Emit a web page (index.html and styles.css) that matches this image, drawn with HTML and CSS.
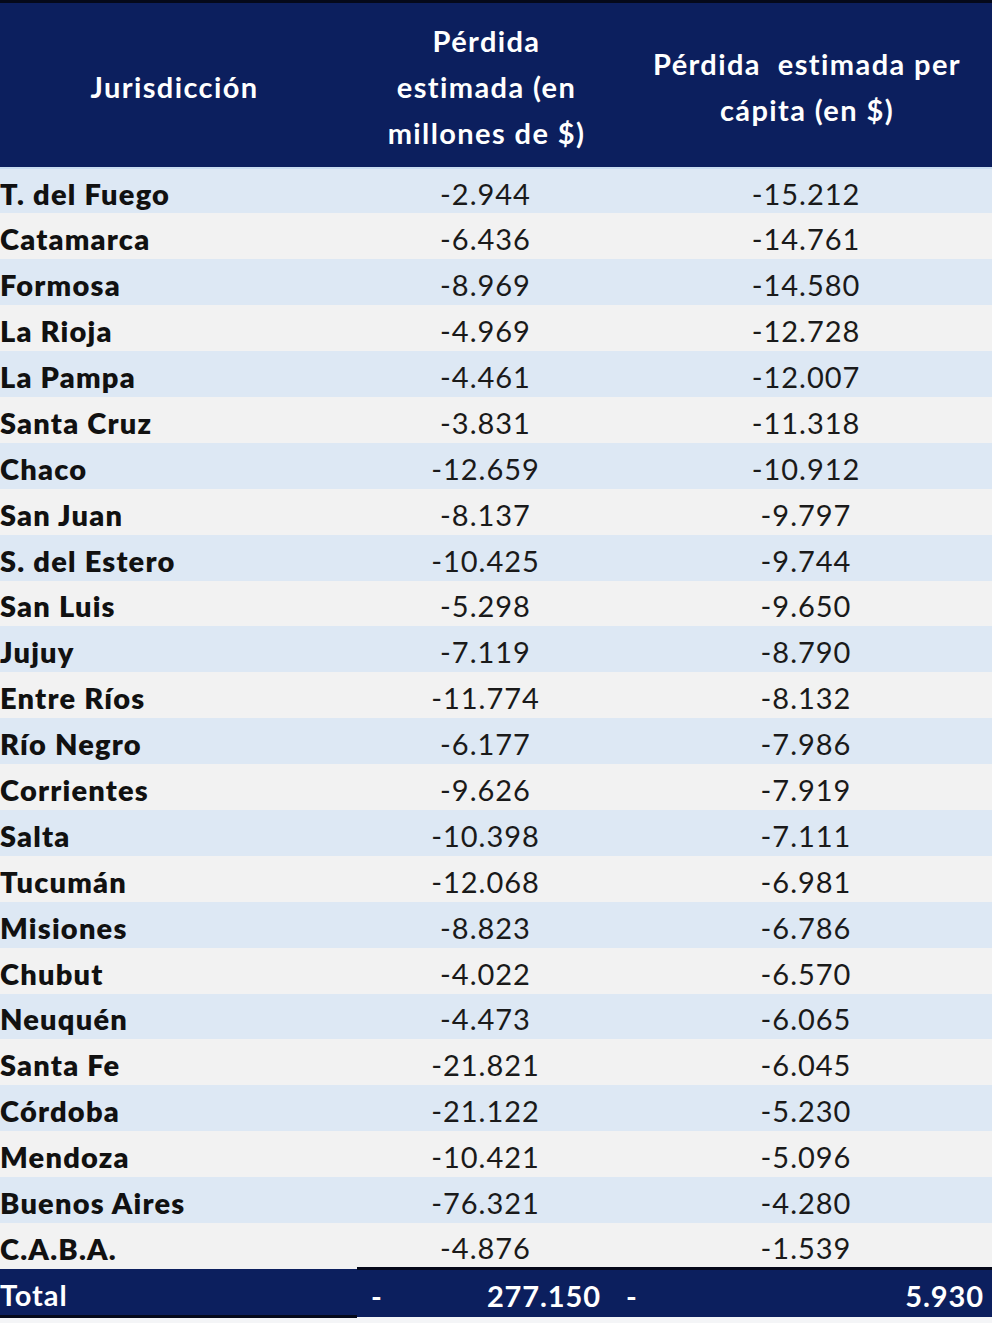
FILE: index.html
```html
<!DOCTYPE html>
<html lang="es">
<head>
<meta charset="utf-8">
<title>Pérdida estimada por jurisdicción</title>
<link rel="stylesheet" href="styles.css">
</head>
<body>
<table class="tbl">
  <colgroup>
    <col class="c1">
    <col class="c2">
    <col class="c3">
  </colgroup>
  <thead>
    <tr class="head">
      <th class="h1">Jurisdicción</th>
      <th class="h2">Pérdida<br>estimada (en<br>millones de $)</th>
      <th class="h3">Pérdida&nbsp; estimada per<br>cápita (en $)</th>
    </tr>
  </thead>
  <tbody>
    <tr class="odd"><td class="name">T. del Fuego</td><td class="num n2">-2.944</td><td class="num">-15.212</td></tr>
    <tr class="even"><td class="name">Catamarca</td><td class="num n2">-6.436</td><td class="num">-14.761</td></tr>
    <tr class="odd"><td class="name">Formosa</td><td class="num n2">-8.969</td><td class="num">-14.580</td></tr>
    <tr class="even"><td class="name">La Rioja</td><td class="num n2">-4.969</td><td class="num">-12.728</td></tr>
    <tr class="odd"><td class="name">La Pampa</td><td class="num n2">-4.461</td><td class="num">-12.007</td></tr>
    <tr class="even"><td class="name">Santa Cruz</td><td class="num n2">-3.831</td><td class="num">-11.318</td></tr>
    <tr class="odd"><td class="name">Chaco</td><td class="num n2">-12.659</td><td class="num">-10.912</td></tr>
    <tr class="even"><td class="name">San Juan</td><td class="num n2">-8.137</td><td class="num">-9.797</td></tr>
    <tr class="odd"><td class="name">S. del Estero</td><td class="num n2">-10.425</td><td class="num">-9.744</td></tr>
    <tr class="even"><td class="name">San Luis</td><td class="num n2">-5.298</td><td class="num">-9.650</td></tr>
    <tr class="odd"><td class="name">Jujuy</td><td class="num n2">-7.119</td><td class="num">-8.790</td></tr>
    <tr class="even"><td class="name">Entre Ríos</td><td class="num n2">-11.774</td><td class="num">-8.132</td></tr>
    <tr class="odd"><td class="name">Río Negro</td><td class="num n2">-6.177</td><td class="num">-7.986</td></tr>
    <tr class="even"><td class="name">Corrientes</td><td class="num n2">-9.626</td><td class="num">-7.919</td></tr>
    <tr class="odd"><td class="name">Salta</td><td class="num n2">-10.398</td><td class="num">-7.111</td></tr>
    <tr class="even"><td class="name">Tucumán</td><td class="num n2">-12.068</td><td class="num">-6.981</td></tr>
    <tr class="odd"><td class="name">Misiones</td><td class="num n2">-8.823</td><td class="num">-6.786</td></tr>
    <tr class="even"><td class="name">Chubut</td><td class="num n2">-4.022</td><td class="num">-6.570</td></tr>
    <tr class="odd"><td class="name">Neuquén</td><td class="num n2">-4.473</td><td class="num">-6.065</td></tr>
    <tr class="even"><td class="name">Santa Fe</td><td class="num n2">-21.821</td><td class="num">-6.045</td></tr>
    <tr class="odd"><td class="name">Córdoba</td><td class="num n2">-21.122</td><td class="num">-5.230</td></tr>
    <tr class="even"><td class="name">Mendoza</td><td class="num n2">-10.421</td><td class="num">-5.096</td></tr>
    <tr class="odd"><td class="name">Buenos Aires</td><td class="num n2">-76.321</td><td class="num">-4.280</td></tr>
    <tr class="even"><td class="name">C.A.B.A.</td><td class="num n2">-4.876</td><td class="num">-1.539</td></tr>
  </tbody>
  <tfoot>
    <tr class="total">
      <td class="t1">Total</td>
      <td class="t2"><span class="acc"><span class="sign">-</span><span class="val">277.150</span></span></td>
      <td class="t3"><span class="acc"><span class="sign">-</span><span class="val">5.930</span></span></td>
    </tr>
  </tfoot>
</table>
</body>
</html>
```
FILE: styles.css
```css
html, body {
  margin: 0;
  padding: 0;
  background: #f4f5f7;
}

body {
  width: 992px;
  height: 1323px;
  overflow: hidden;
  font-family: "Lato", "Liberation Sans", sans-serif;
}

.tbl {
  width: 992px;
  border-collapse: collapse;
  table-layout: fixed;
  border-top: 3px solid #05091a;
}

.c1 { width: 357px; }
.c2 { width: 263px; }
.c3 { width: 372px; }

.head {
  height: 166px;
  background: #0c1f5e;
  border-bottom: 2px solid #c9dcf0;
}

.head th {
  color: #ffffff;
  font-weight: 700;
  font-size: 29px;
  line-height: 46px;
  text-align: center;
  vertical-align: middle;
  padding: 4px 0 0 0;
  letter-spacing: 1.4px;
}

.h1 { padding-right: 8px !important; }
.h2 { padding-right: 4px !important; }
.h3 { padding-left: 2px !important; }

tbody tr { height: 45.9px; }
.odd { background: #dde8f4; }
.even { background: #f2f2f2; }

tbody td {
  padding: 0;
  vertical-align: middle;
  color: #111111;
  line-height: 30px;
  padding-top: 6px;
}

.name {
  font-weight: 800;
  font-size: 29px;
  text-align: left;
  white-space: nowrap;
  letter-spacing: 1.2px;
}

.num {
  font-weight: 400;
  font-size: 29px;
  text-align: center;
  letter-spacing: 1px;
  color: #1a1a1a;
}

.n2 { padding-right: 6px; }

.total {
  height: 48px;
  background: #0c1f5e;
  color: #ffffff;
}

.total td {
  padding: 0;
  font-weight: 700;
  font-size: 29px;
  vertical-align: middle;
  padding-top: 4px;
  letter-spacing: 0.9px;
}

.t1 {
  border-bottom: 3px solid #05091a;
  text-align: left;
}

.t2, .t3 {
  border-top: 3px solid #05091a;
}

.acc {
  display: flex;
  justify-content: space-between;
  align-items: center;
}

.t2 .acc { padding: 0 19px 0 14px; }
.t3 .acc { padding: 0 8px 0 6px; }
```
